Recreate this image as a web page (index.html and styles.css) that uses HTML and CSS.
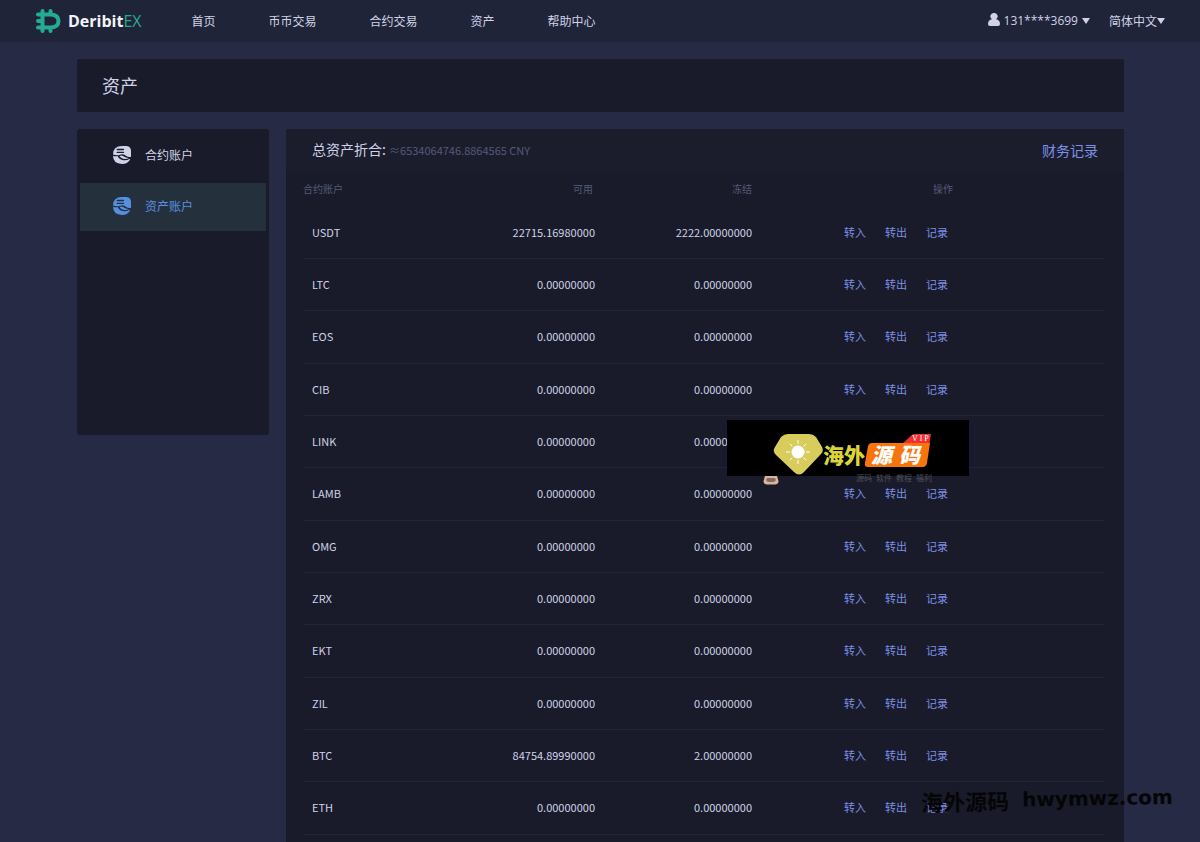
FILE: index.html
```html
<!DOCTYPE html>
<html lang="zh-CN">
<head>
<meta charset="utf-8">
<title>DeribitEX 资产</title>
<link rel="stylesheet" href="styles.css">
</head>
<body>
<svg class="defs" aria-hidden="true">
  <symbol id="coin" viewBox="0 0 18 18">
    <path fill="currentColor" d="M9 0h4.500Q18 .5 18 5v5.800q-2.500.6-4.800-.8L11.500 8.800q-1.700-1-3.500-.4L5.500 9.300Q3 9.600 0 8.600 0 0 9 0z"/>
    <path fill="currentColor" d="M0 9.800q2.500.9 4.500.3Q6.500 13.800 10.500 14.200q3.500.3 6-1.200.8-.2.500.8Q14.500 18 9 18 0 17.500 0 9.800z"/>
    <path fill="currentColor" d="M6.500 10.200q2-1.200 4 .1 2.500 2 5.500 1.700-2 1.200-5 .9-3-.4-4.500-2.700z"/>
    <path class="coin-cut" fill="none" stroke-width="1.300" stroke-linecap="round" d="M4.200 3.500h6.300M4.200 6.400h6.300"/>
  </symbol>
  <symbol id="caret" viewBox="0 0 8 6"><path fill="currentColor" d="M0 0h8L4 6z"/></symbol>
</svg>
<header class="topbar">
  <a class="brand" href="#">
    <svg class="brand-mark" viewBox="0 0 26 26" aria-hidden="true">
      <path fill="none" stroke="#24ab96" stroke-width="4" stroke-linejoin="round" stroke-linecap="round" d="M7.500 3v20M15.500 3v3M15.500 20v3M3 6.500h12q8.500 0 8.500 6.500T15 19.500H3M3 13h4"/>
    </svg>
    <span class="brand-name">Deribit<span class="brand-ex">EX</span></span>
  </a>
  <nav class="nav">
    <a href="#">首页</a><a href="#">币币交易</a><a href="#">合约交易</a><a href="#">资产</a><a href="#">帮助中心</a>
  </nav>
  <div class="tools">
    <button class="tool user" type="button">
      <svg class="person" viewBox="0 0 12 13" aria-hidden="true"><path fill="currentColor" d="M6 0a3.400 3.400 0 0 1 2 6.300q4 .7 4 4.700 0 2-2 2H2q-2 0-2-2 0-4 4-4.700A3.400 3.400 0 0 1 6 0z"/></svg>
      <span class="phone">131****3699</span>
      <svg class="caret" aria-hidden="true"><use href="#caret"/></svg>
    </button>
    <button class="tool" type="button"><span>简体中文</span><svg class="caret" aria-hidden="true"><use href="#caret"/></svg></button>
  </div>
</header>
<main class="page">
  <h1 class="title">资产</h1>
  <div class="columns">
    <nav class="side">
      <a class="side-item" href="#"><svg class="coin" aria-hidden="true"><use href="#coin"/></svg>合约账户</a>
      <a class="side-item active" href="#"><svg class="coin" aria-hidden="true"><use href="#coin"/></svg>资产账户</a>
    </nav>
    <section class="panel">
      <div class="panel-head">
        <h2 class="total">总资产折合: <span class="amount">≈6534064746.8864565 CNY</span></h2>
        <a class="history" href="#">财务记录</a>
      </div>
      <table class="assets">
        <thead><tr><th class="name">合约账户</th><th class="free">可用</th><th class="frozen">冻结</th><th class="ops">操作</th></tr></thead>
        <tbody>
          <tr><td>USDT</td><td>22715.16980000</td><td>2222.00000000</td><td><div class="links"><a href="#">转入</a><a href="#">转出</a><a href="#">记录</a></div></td></tr>
          <tr><td>LTC</td><td>0.00000000</td><td>0.00000000</td><td><div class="links"><a href="#">转入</a><a href="#">转出</a><a href="#">记录</a></div></td></tr>
          <tr><td>EOS</td><td>0.00000000</td><td>0.00000000</td><td><div class="links"><a href="#">转入</a><a href="#">转出</a><a href="#">记录</a></div></td></tr>
          <tr><td>CIB</td><td>0.00000000</td><td>0.00000000</td><td><div class="links"><a href="#">转入</a><a href="#">转出</a><a href="#">记录</a></div></td></tr>
          <tr><td>LINK</td><td>0.00000000</td><td>0.00000000</td><td><div class="links"><a href="#">转入</a><a href="#">转出</a><a href="#">记录</a></div></td></tr>
          <tr><td>LAMB</td><td>0.00000000</td><td>0.00000000</td><td><div class="links"><a href="#">转入</a><a href="#">转出</a><a href="#">记录</a></div></td></tr>
          <tr><td>OMG</td><td>0.00000000</td><td>0.00000000</td><td><div class="links"><a href="#">转入</a><a href="#">转出</a><a href="#">记录</a></div></td></tr>
          <tr><td>ZRX</td><td>0.00000000</td><td>0.00000000</td><td><div class="links"><a href="#">转入</a><a href="#">转出</a><a href="#">记录</a></div></td></tr>
          <tr><td>EKT</td><td>0.00000000</td><td>0.00000000</td><td><div class="links"><a href="#">转入</a><a href="#">转出</a><a href="#">记录</a></div></td></tr>
          <tr><td>ZIL</td><td>0.00000000</td><td>0.00000000</td><td><div class="links"><a href="#">转入</a><a href="#">转出</a><a href="#">记录</a></div></td></tr>
          <tr><td>BTC</td><td>84754.89990000</td><td>2.00000000</td><td><div class="links"><a href="#">转入</a><a href="#">转出</a><a href="#">记录</a></div></td></tr>
          <tr><td>ETH</td><td>0.00000000</td><td>0.00000000</td><td><div class="links"><a href="#">转入</a><a href="#">转出</a><a href="#">记录</a></div></td></tr>
        </tbody>
      </table>
    </section>
  </div>
</main>
<aside class="promo">
  <svg class="promo-art" viewBox="0 0 242 66" aria-hidden="true">
    <path fill="#000" d="M0 0h242v56H0z"/>
    <path fill="#d8cd5c" d="M61 14h21q4 0 7 3l6 10q2 4-1 7L77 52q-5 5-10 0L49 35q-4-4-1-8l6-10q3-3 7-3z"/>
    <circle cx="71" cy="32" r="6.500" fill="#fff"/>
    <path stroke="#fff" stroke-width="1" stroke-linecap="round" d="M71 20.500v3M71 40.500v3M59.500 32h3M79.500 32h3M63 24l2 2M77 38l2 2M79 24l-2 2M65 38l-2 2"/>
    <path fill="#ee2f36" d="M175 24l10-9q1-1 3-1h16l-2 12z"/>
    <path fill="#f7750c" d="M145 23h58l-3 20q-1 4-4 4h-55q-4 0-3-4l3-17q1-3 4-3z"/>
    <path fill="#d5b5a3" d="M38 56h12l1.500 5q0 3-3 3.500h-9q-3-.5-3-3.500z"/>
    <path fill="#8f6759" d="M40 58h8l1 2q-1 2-3 2h-4q-2 0-3-2z"/>
  </svg>
  <span class="promo-left">海外</span>
  <span class="promo-right"><span>源</span><span>码</span></span>
  <span class="promo-vip">V I P</span>
  <span class="promo-tags"><span>源码</span><span>软件</span><span>教程</span><span>福利</span></span>
</aside>
<div class="watermark"><span class="mark-cn">海外源码</span><span class="mark-url">hwymwz.com</span></div>
</body>
</html>
```
FILE: styles.css
```css
* { box-sizing: border-box; }
body {
  margin: 0;
  min-height: 100vh;
  display: flex;
  flex-direction: column;
  position: relative;
  overflow-x: hidden;
  background: #262a44;
  color: #d0d3e8;
  font: 12px/18px "Noto Sans CJK SC", sans-serif;
}
a { color: inherit; text-decoration: none; }
.defs { position: absolute; width: 0; height: 0; }

.topbar {
  height: 42px;
  padding: 0 35px;
  display: flex;
  align-items: center;
  background: #202438;
}
.brand { display: flex; align-items: center; gap: 7px; margin-right: 50px; }
.brand-mark { width: 26px; height: 26px; }
.brand-name { font: bold 16px/24px "Open Sans", sans-serif; color: #f2f4f8; }
.brand-ex { font-weight: 400; color: #24ab96; }
.nav { display: flex; gap: 53px; }
.tools { display: flex; gap: 19px; margin-left: auto; }
.tool {
  display: flex;
  align-items: center;
  padding: 0;
  border: 0;
  background: none;
  color: inherit;
  font: inherit;
}
.user { gap: 4px; }
.person { width: 12px; height: 13px; margin-bottom: 3px; }
.phone { font-family: "Open Sans", sans-serif; }
.caret { width: 8px; height: 6px; }

.page {
  flex: 1;
  display: flex;
  flex-direction: column;
  gap: 17px;
  padding: 17px 76px 0 77px;
}
.title {
  margin: 0;
  padding: 13px 25px;
  border-radius: 2px;
  background: #191b2a;
  font-size: 18px;
  line-height: 27px;
  font-weight: 400;
}
.columns { flex: 1; display: flex; gap: 17px; }
.side {
  flex: 0 0 192px;
  align-self: flex-start;
  min-height: 306px;
  padding: 3px;
  display: flex;
  flex-direction: column;
  gap: 3px;
  border-radius: 3px;
  background: #191b2a;
}
.side-item {
  --cut: #191b2a;
  height: 48px;
  padding: 0 0 2px 33px;
  display: flex;
  align-items: center;
  gap: 14px;
}
.side-item.active { --cut: #25303d; background: #25303d; color: #5590e0; }
.coin { width: 18px; height: 18px; }
.coin-cut { stroke: var(--cut); }

.panel { flex: 1; background: #191b2a; border-radius: 2px 2px 0 0; }
.panel-head {
  height: 43px;
  padding: 0 26px 2px;
  display: flex;
  align-items: center;
  justify-content: space-between;
  background: #1b1d2d;
}
.total { margin: 0; font-size: 14px; font-weight: 400; }
.amount { font-size: 11px; color: #555a78; }
.history { font-size: 14px; color: #7d8fe6; }

.assets {
  width: calc(100% - 36px);
  margin: 0 19px 0 17px;
  table-layout: fixed;
  border-collapse: separate;
  border-spacing: 0;
  font-size: 11px;
}
.assets th {
  height: 35px;
  padding: 0 2px 2px 0;
  font-size: 10px;
  font-weight: 400;
  text-align: right;
  color: #555a78;
}
.assets .name { text-align: left; }
.assets .free { width: 161px; }
.assets .frozen { width: 157px; padding-right: 0; }
.assets .ops { width: 353px; padding-left: 181px; text-align: left; }
.assets td {
  height: 52px;
  padding: 0 0 2px;
  border-bottom: 1px solid #1f2836;
  text-align: right;
}
.assets tr:nth-child(3n) td { height: 53px; }
.assets td:first-child { padding-left: 9px; text-align: left; }
.links { display: flex; gap: 19px; padding-left: 92px; color: #7d8fe6; }

.promo { position: absolute; left: 727px; top: 420px; width: 242px; height: 66px; }
.promo-art { display: block; width: 242px; height: 66px; }
.promo-left, .promo-right, .promo-vip, .promo-tags { position: absolute; white-space: nowrap; }
.promo-left { left: 96px; top: 19px; font-size: 21px; line-height: 30px; font-weight: 900; color: #dcd43c; }
.promo-right { left: 144px; top: 19px; display: flex; gap: 7px; font-size: 21px; line-height: 30px; font-weight: 900; font-style: italic; color: #fff; }
.promo-vip { left: 185px; top: 14px; font: 8px/10px "Liberation Serif", serif; color: #fff; }
.promo-tags { left: 129px; top: 53px; display: flex; gap: 4px; font-size: 8px; line-height: 10px; color: #50505a; }

.watermark {
  position: absolute;
  left: 921px;
  top: 784px;
  display: flex;
  align-items: center;
  gap: 13px;
  white-space: nowrap;
  line-height: 30px;
  color: #050508;
  transform: rotate(-1deg);
}
.mark-cn { font-size: 22px; font-weight: 700; }
.mark-url { font-family: "DejaVu Sans", sans-serif; font-size: 20px; font-weight: 700; }
```
